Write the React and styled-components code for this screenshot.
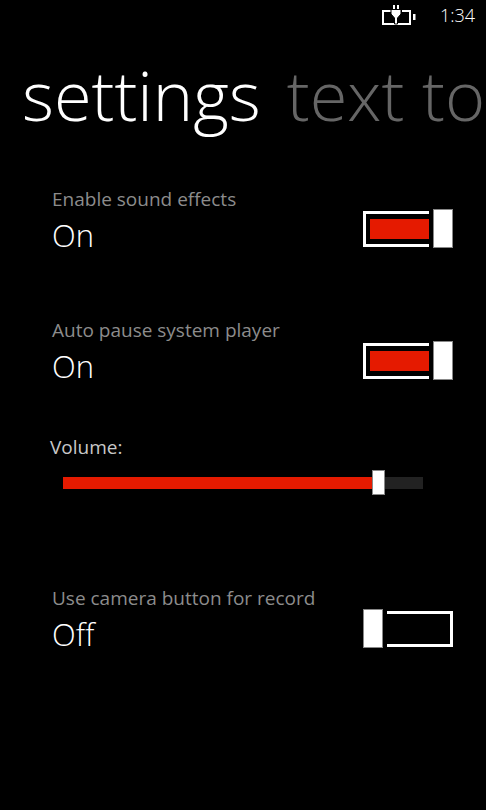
import React from 'react';
import styled, { createGlobalStyle } from 'styled-components';

const GlobalStyle = createGlobalStyle`
  html, body {
    margin: 0;
    padding: 0;
    background: #000;
  }
`;

const settings = [
  { label: 'Enable sound effects', on: true, top: 0, lift: 10 },
  { label: 'Auto pause system player', on: true, top: 59, lift: 9 },
];

const BatteryIcon = () => (
  <svg width="36" height="22" viewBox="0 0 36 22" fill="none">
    <path d="M11 7H3v13h27V7h-8" stroke="#fff" strokeWidth="2" />
    <rect x="33" y="10" width="2.5" height="6" fill="#fff" />
    <path d="M14 1v5M18 1v5" stroke="#fff" strokeWidth="2" />
    <path
      d="M11 5.5h10v4.5l-3.5 4v6h-3v-6L11 10z"
      fill="#fff"
      stroke="#000"
      strokeWidth="1"
    />
  </svg>
);

const Toggle = ({ on, lift = 9 }) => (
  <Switch $lift={lift}>
    {!on && <Thumb />}
    <Frame $on={on}>{on && <Fill />}</Frame>
    {on && <Thumb />}
  </Switch>
);

export default function App() {
  return (
    <Page>
      <GlobalStyle />
      <StatusBar>
        <BatteryIcon />
        <Clock>1:34</Clock>
      </StatusBar>
      <Pivot>
        <PivotItem>settings</PivotItem>
        <PivotItem $muted>text to</PivotItem>
      </Pivot>
      <Content>
        {settings.map((s) => (
          <Row key={s.label} $top={s.top}>
            <RowText>
              <Label>{s.label}</Label>
              <Value>{s.on ? 'On' : 'Off'}</Value>
            </RowText>
            <Toggle on={s.on} lift={s.lift} />
          </Row>
        ))}
        <VolumeLabel>Volume:</VolumeLabel>
        <Slider>
          <SliderFill />
          <SliderThumb />
        </Slider>
        <Row $top={96}>
          <RowText>
            <Label>Use camera button for record</Label>
            <Value>Off</Value>
          </RowText>
          <Toggle on={false} />
        </Row>
      </Content>
    </Page>
  );
}

const Page = styled.div`
  width: 486px;
  height: 810px;
  overflow: hidden;
  background: #000;
  color: #fff;
  font-family: 'Open Sans', 'Liberation Sans', sans-serif;
`;

const StatusBar = styled.div`
  height: 30px;
  display: flex;
  align-items: center;
  justify-content: flex-end;
  padding-right: 11px;
  gap: 24px;
`;

const Clock = styled.span`
  font-size: 18px;
  color: #fff;
  font-weight: 300;
`;

const Pivot = styled.div`
  display: flex;
  gap: 26px;
  padding-left: 22px;
  margin-top: 23px;
  height: 105px;
  white-space: nowrap;
`;

const PivotItem = styled.div`
  font-size: 68.5px;
  line-height: 84px;
  font-weight: 300;
  color: ${(p) => (p.$muted ? '#666' : '#fff')};
`;

const Content = styled.div`
  display: flex;
  flex-direction: column;
  padding: 28px 33px 0 50px;
`;

const Row = styled.div`
  display: flex;
  align-items: flex-end;
  justify-content: space-between;
  padding-left: 2px;
  margin-top: ${(p) => p.$top}px;
`;

const RowText = styled.div`
  display: flex;
  flex-direction: column;
`;

const Label = styled.div`
  font-size: 19px;
  line-height: 26px;
  color: #8c8c8c;
`;

const Value = styled.div`
  font-size: 31px;
  line-height: 46px;
  font-weight: 300;
`;

const Switch = styled.div`
  display: flex;
  align-items: center;
  gap: 4px;
  margin-bottom: ${(p) => p.$lift}px;
`;

const Thumb = styled.div`
  box-sizing: border-box;
  width: 20px;
  height: 39px;
  background: #fff;
  border: 1px solid #888;
`;

const Frame = styled.div`
  box-sizing: border-box;
  display: flex;
  align-items: center;
  justify-content: ${(p) => (p.$on ? 'flex-end' : 'flex-start')};
  width: 66px;
  height: 36px;
  border: 3px solid #fff;
  border-${(p) => (p.$on ? 'right' : 'left')}: none;
`;

const Fill = styled.div`
  width: 59px;
  height: 20px;
  background: #e51a00;
`;

const VolumeLabel = styled.div`
  font-size: 19px;
  line-height: 26px;
  color: #c8c8c8;
  margin-top: 45px;
`;

const Slider = styled.div`
  position: relative;
  width: 360px;
  height: 12px;
  margin: 17px 0 0 13px;
  background: #222;
`;

const SliderFill = styled.div`
  width: 310px;
  height: 100%;
  background: #e51a00;
`;

const SliderThumb = styled.div`
  position: absolute;
  left: 309px;
  top: -7px;
  box-sizing: border-box;
  width: 13px;
  height: 25px;
  background: #fff;
  border: 1px solid #888;
`;
